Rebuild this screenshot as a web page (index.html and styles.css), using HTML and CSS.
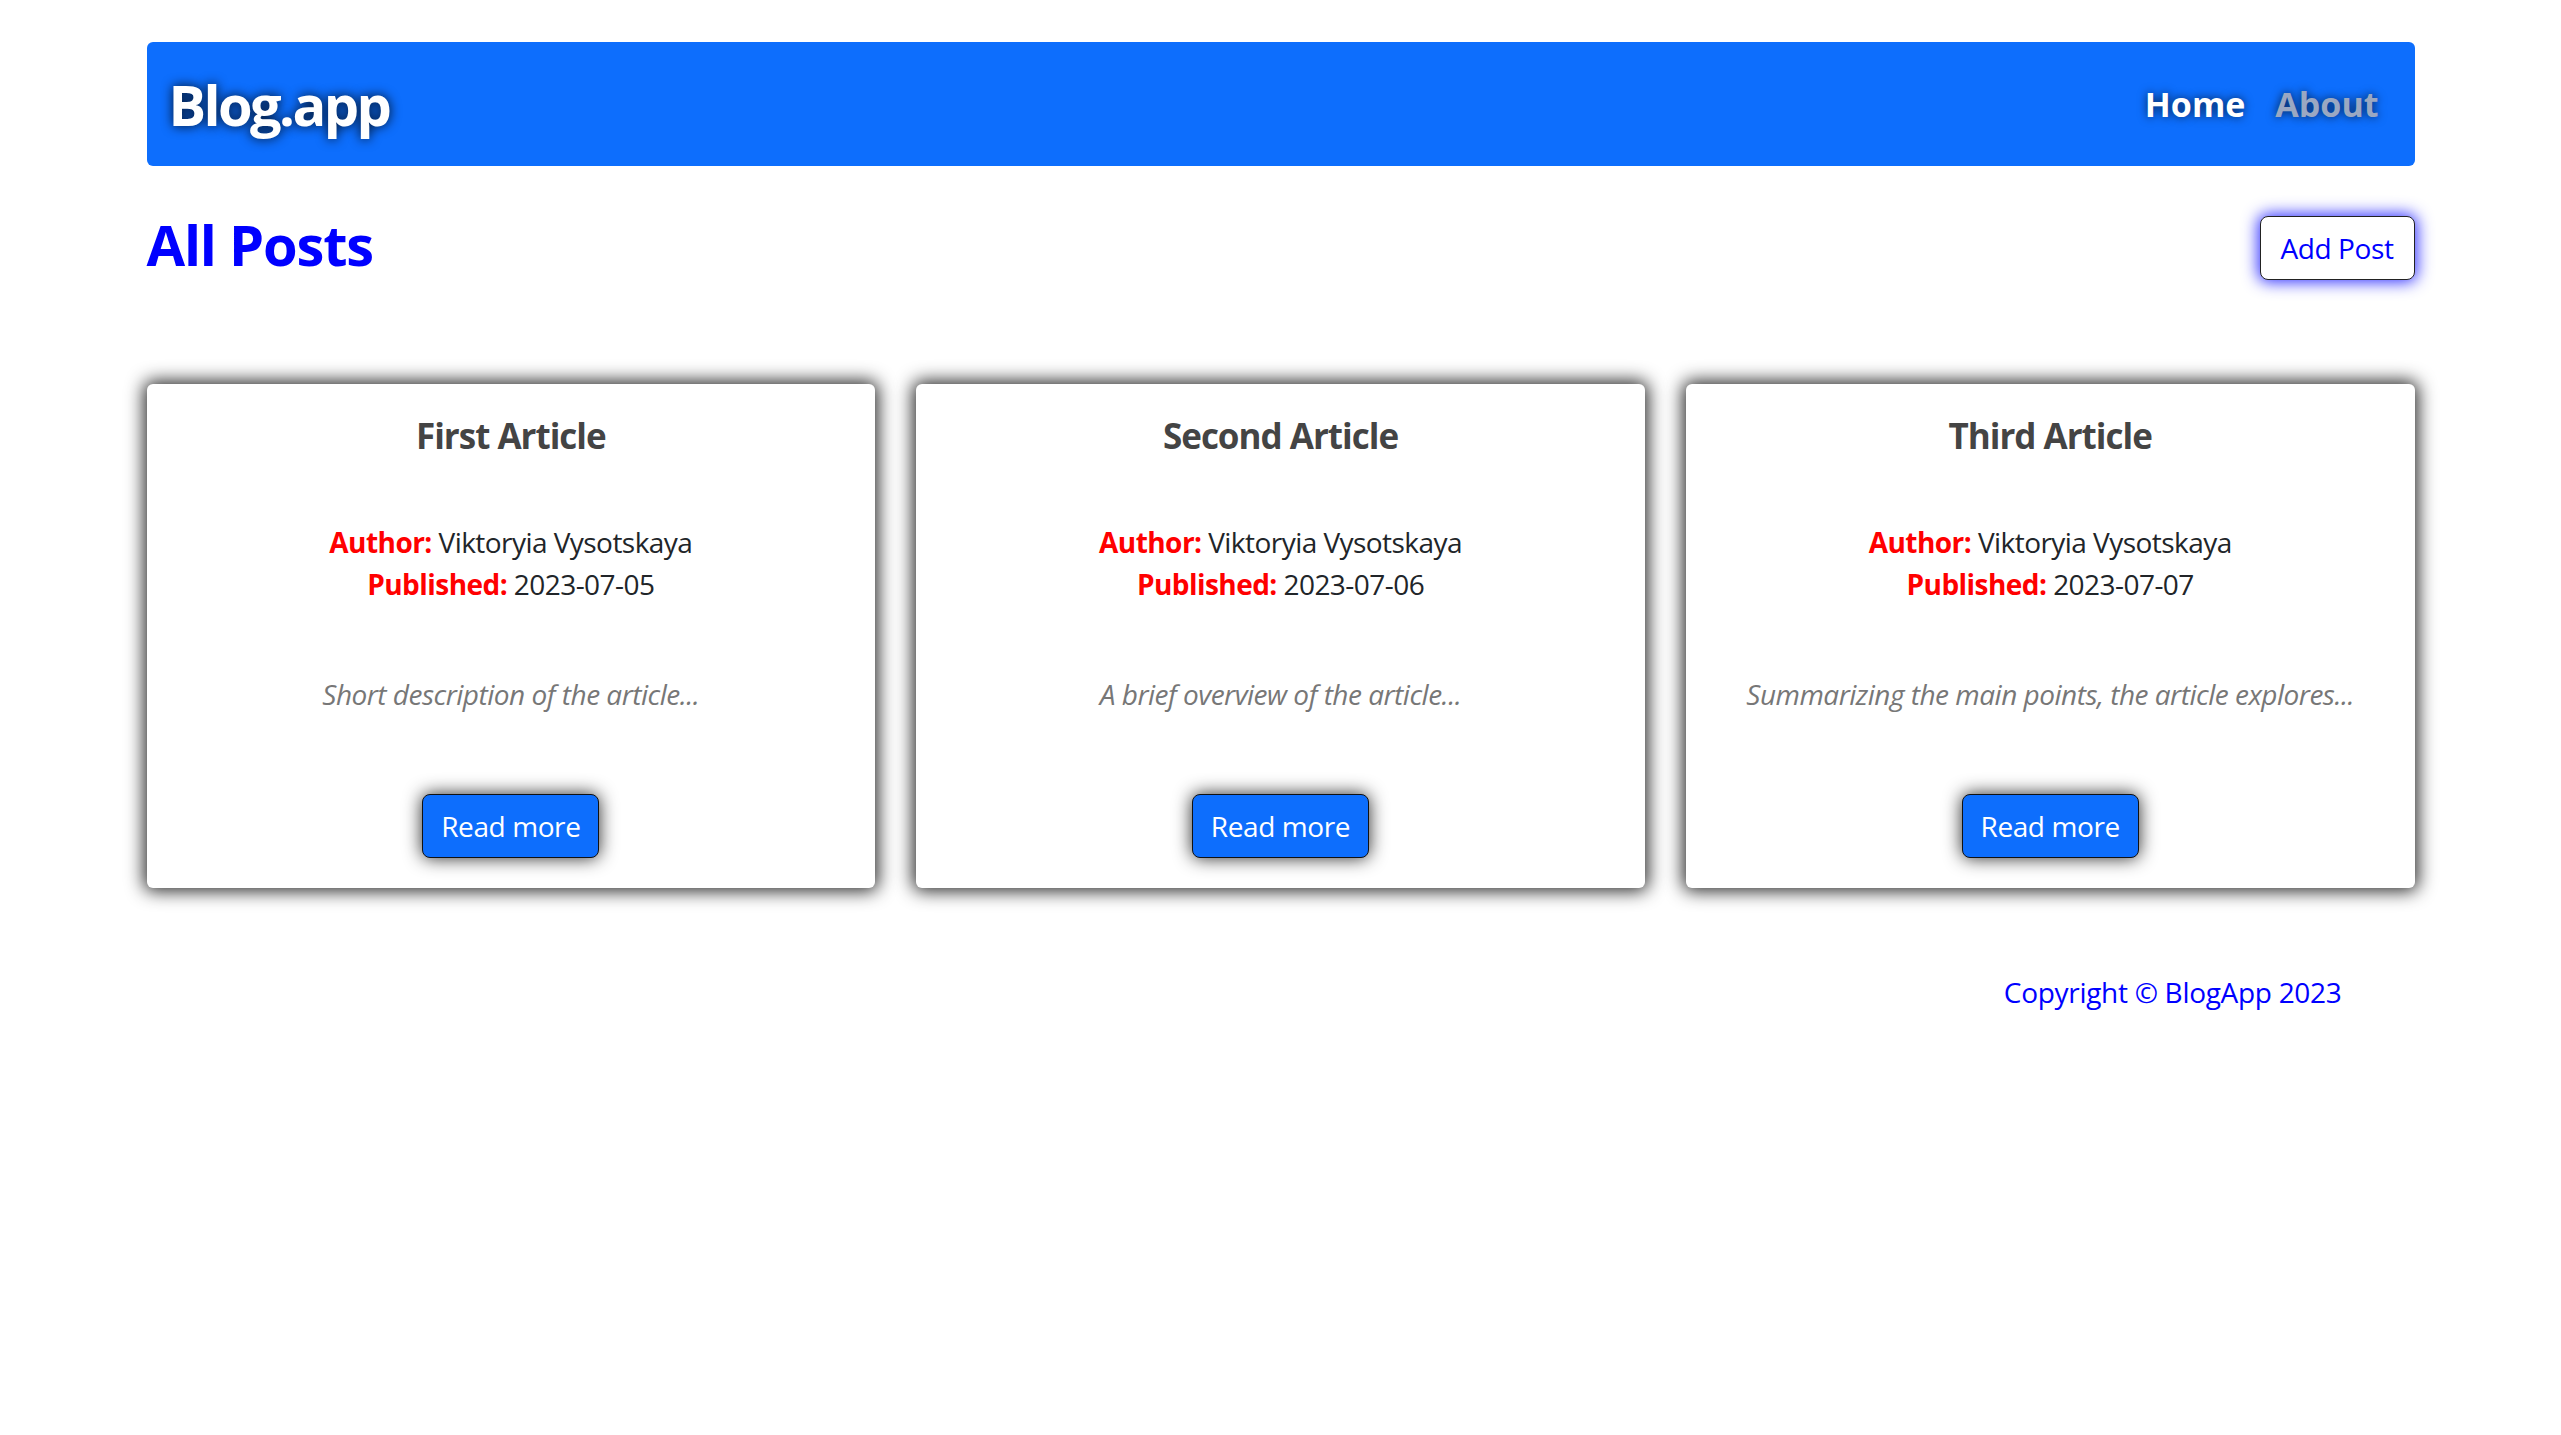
FILE: index.html
```html
<!DOCTYPE html>
<html lang="en">
<head>
<meta charset="utf-8">
<title>Blog.app</title>
<link rel="stylesheet" href="styles.css">
</head>
<body>
<div class="container">
  <nav class="navbar">
    <a class="brand" href="#">Blog.app</a>
    <div class="nav-links">
      <a class="nav-link active" href="#">Home</a>
      <a class="nav-link" href="#">About</a>
    </div>
  </nav>

  <div class="title-row">
    <h1 class="page-title">All Posts</h1>
    <button class="btn-add">Add Post</button>
  </div>

  <div class="cards">
    <div class="card">
      <h3 class="card-title">First Article</h3>
      <p class="meta"><span class="label">Author:</span> Viktoryia Vysotskaya<br><span class="label">Published:</span> 2023-07-05</p>
      <p class="desc">Short description of the article...</p>
      <button class="btn-read">Read more</button>
    </div>
    <div class="card">
      <h3 class="card-title">Second Article</h3>
      <p class="meta"><span class="label">Author:</span> Viktoryia Vysotskaya<br><span class="label">Published:</span> 2023-07-06</p>
      <p class="desc">A brief overview of the article...</p>
      <button class="btn-read">Read more</button>
    </div>
    <div class="card">
      <h3 class="card-title">Third Article</h3>
      <p class="meta"><span class="label">Author:</span> Viktoryia Vysotskaya<br><span class="label">Published:</span> 2023-07-07</p>
      <p class="desc">Summarizing the main points, the article explores...</p>
      <button class="btn-read">Read more</button>
    </div>
  </div>

  <footer class="footer">Copyright © BlogApp 2023</footer>
</div>
</body>
</html>
```
FILE: styles.css
```css
body {
  margin: 0;
  background: #fff;
  font-family: "Open Sans", "Noto Sans", sans-serif;
  color: #212529;
}

.container {
  width: 2268px;
  margin: 0 auto;
}

.navbar {
  margin-top: 42px;
  height: 124px;
  box-sizing: border-box;
  background: #0d6efd;
  border-radius: 6px;
  display: flex;
  align-items: center;
  justify-content: space-between;
  padding: 0 36px 0 22px;
}

.brand {
  font-size: 56px;
  font-weight: 700;
  letter-spacing: -2.6px;
  color: #fff;
  text-decoration: none;
  text-shadow: 0 0 12px rgba(0, 0, 0, 0.9);
}

.nav-links {
  display: flex;
  gap: 30px;
}

.nav-link {
  font-size: 34px;
  font-weight: 700;
  color: #9aa8c2;
  text-decoration: none;
  text-shadow: 0 0 10px rgba(0, 0, 0, 0.7);
}

.nav-link.active {
  color: #fff;
}

.title-row {
  display: flex;
  justify-content: space-between;
  align-items: flex-start;
  margin-top: 40px;
}

.page-title {
  margin: 0;
  font-size: 56px;
  font-weight: 700;
  letter-spacing: -1.2px;
  color: #0000ff;
}

.btn-add {
  margin-top: 10px;
  width: 155px;
  height: 64px;
  background: #fff;
  color: #0000ff;
  font-family: inherit;
  font-size: 28px;
  letter-spacing: -0.4px;
  border: 1.5px solid #222;
  border-radius: 8px;
  box-shadow: 0 0 16px 2px #3030ff;
  padding: 0;
}

.cards {
  display: grid;
  grid-template-columns: repeat(3, 1fr);
  gap: 41px;
  margin-top: 102px;
}

.card {
  height: 504px;
  box-sizing: border-box;
  background: #fff;
  border-radius: 6px;
  box-shadow: 0 0 18px 3px rgba(0, 0, 0, 0.85);
  display: flex;
  flex-direction: column;
  align-items: center;
  padding: 28px 24px 30px;
  text-align: center;
}

.card-title {
  margin: 0;
  font-size: 35px;
  font-weight: 700;
  letter-spacing: -1px;
  color: #444;
}

.meta {
  margin: 62px 0 0;
  font-size: 28px;
  line-height: 42px;
  letter-spacing: -0.55px;
  color: #212529;
}

.label {
  color: #ff0000;
  font-weight: 700;
}

.desc {
  margin: 70px 0 0;
  font-size: 28px;
  font-style: italic;
  letter-spacing: -0.5px;
  color: #777;
}

.btn-read {
  margin-top: auto;
  width: 177px;
  height: 64px;
  background: #0d6efd;
  color: #fff;
  font-family: inherit;
  font-size: 28px;
  letter-spacing: -0.4px;
  border: 1.5px solid #111;
  border-radius: 8px;
  box-shadow: 0 0 18px rgba(0, 0, 0, 0.85);
  padding: 0;
}

.footer {
  margin-top: 85px;
  text-align: right;
  padding-right: 73px;
  font-size: 28px;
  letter-spacing: -0.3px;
  color: #0000ff;
}
```
